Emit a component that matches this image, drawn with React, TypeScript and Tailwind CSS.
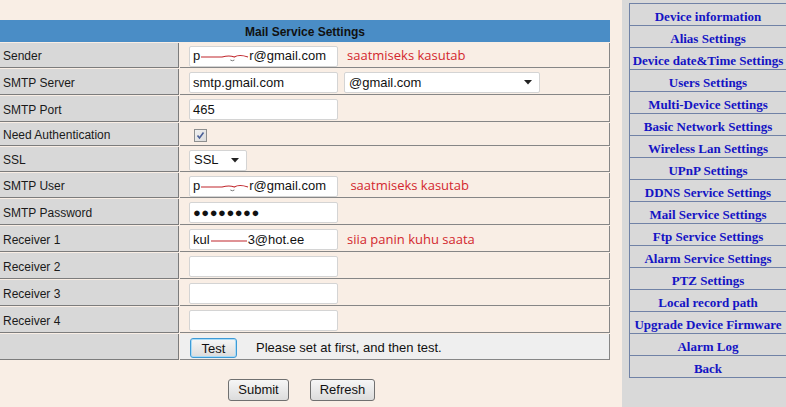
import React from "react";

const navItems = [
  "Device information",
  "Alias Settings",
  "Device date&Time Settings",
  "Users Settings",
  "Multi-Device Settings",
  "Basic Network Settings",
  "Wireless Lan Settings",
  "UPnP Settings",
  "DDNS Service Settings",
  "Mail Service Settings",
  "Ftp Service Settings",
  "Alarm Service Settings",
  "PTZ Settings",
  "Local record path",
  "Upgrade Device Firmware",
  "Alarm Log",
  "Back",
];

// red pen marks over the hidden parts of the addresses
function Scribble({ width, wavy }: { width: number; wavy?: boolean }) {
  return (
    <svg width={width} height="14" viewBox={`0 0 ${width} 14`} className="inline-block shrink-0">
      {wavy ? (
        <path
          d={`M1 8 L${width * 0.45} 8 Q${width * 0.6} 6 ${width * 0.7} 8 Q${width * 0.8} 5 ${width - 1} 8`}
          stroke="#c0272d"
          strokeWidth="1.2"
          fill="none"
        />
      ) : (
        <path d={`M1 8 L${width - 1} 8`} stroke="#c0272d" strokeWidth="1.2" fill="none" />
      )}
      {wavy && <path d={`M${width * 0.62} 11 q2 1.5 4 0`} stroke="#777" strokeWidth="1" fill="none" />}
    </svg>
  );
}

function Field({ children, w = "w-[149px]" }: { children?: React.ReactNode; w?: string }) {
  return (
    <div
      className={`${w} h-[21px] flex items-center px-[3px] bg-white border border-[#d4d4d4] rounded-[2px] text-[13px] text-[#111] whitespace-nowrap overflow-hidden`}
    >
      {children}
    </div>
  );
}

function Select({ label, w }: { label: string; w: string }) {
  return (
    <div
      className={`${w} h-[21px] flex items-center justify-between pl-[4px] pr-[7px] bg-white border border-[#d4d4d4] rounded-[2px] text-[13px] text-[#111]`}
    >
      <span>{label}</span>
      <svg width="8" height="5" viewBox="0 0 8 5">
        <path d="M0 0 L8 0 L4 4.5 Z" fill="#222" />
      </svg>
    </div>
  );
}

function Note({ children }: { children: React.ReactNode }) {
  return <span className="ml-[9px] text-[13px] text-[#d3272e] font-['Open_Sans',sans-serif]">{children}</span>;
}

function Row({
  label,
  h,
  children,
  light,
}: {
  label: string;
  h: string;
  children?: React.ReactNode;
  light?: boolean;
}) {
  return (
    <div className={`flex ${h} pt-[1px]`}>
      <div className="w-[179px] h-full bg-[#d8d8d8] border-r border-b border-[#7c7c7c] flex items-center pl-[3px] pt-[2px] text-[12px] text-[#1a1a1a]">
        {label}
      </div>
      <div
        className={`flex-1 ml-[1px] h-full border-r border-b border-[#868686] flex items-center pl-[9px] pt-[2px] ${
          light ? "bg-[#efefef]" : ""
        }`}
      >
        {children}
      </div>
    </div>
  );
}

function Button({ children, w, h = "h-[22px]", focused }: { children: React.ReactNode; w: string; h?: string; focused?: boolean }) {
  return (
    <button
      className={`${w} ${h} rounded-[3px] border text-[13px] text-[#111] bg-gradient-to-b from-[#f6f6f6] to-[#dcdcdc] ${
        focused ? "border-[#3d9ad6] shadow-[inset_0_0_0_1px_#a9dbf6]" : "border-[#707070]"
      }`}
    >
      {children}
    </button>
  );
}

export default function App() {
  return (
    <div className="flex w-[786px] h-[407px] overflow-hidden bg-[#f9eee5] font-['Liberation_Sans',Arial,sans-serif]">
      <div className="w-[622px] shrink-0 pt-[20px]">
        <div className="w-[610px]">
          <div className="h-[22px] bg-[#4a8dc6] flex items-center justify-center pt-[1px] text-[12px] font-bold text-[#111]">
            Mail Service Settings
          </div>
          <Row label="Sender" h="h-[26px]">
            <Field>
              p<Scribble width={49} wavy />r@gmail.com
            </Field>
            <Note>saatmiseks kasutab</Note>
          </Row>
          <Row label="SMTP Server" h="h-[27px]">
            <Field>smtp.gmail.com</Field>
            <div className="ml-[6px]">
              <Select label="@gmail.com" w="w-[196px]" />
            </div>
          </Row>
          <Row label="SMTP Port" h="h-[27px]">
            <Field>465</Field>
          </Row>
          <Row label="Need Authentication" h="h-[24px]">
            <div className="ml-[5px] w-[13px] h-[13px] border border-[#8e8f8f] bg-gradient-to-br from-[#f0f0f0] to-[#dcdcdc] flex items-center justify-center">
              <svg width="9" height="9" viewBox="0 0 9 9">
                <path d="M1.5 4.5 L3.5 7 L7.5 1.5" stroke="#4a5f97" strokeWidth="1.6" fill="none" />
              </svg>
            </div>
          </Row>
          <Row label="SSL" h="h-[26px]">
            <Select label="SSL" w="w-[58px]" />
          </Row>
          <Row label="SMTP User" h="h-[26px]">
            <Field>
              p<Scribble width={49} wavy />r@gmail.com
            </Field>
            <Note>&nbsp;saatmiseks kasutab</Note>
          </Row>
          <Row label="SMTP Password" h="h-[27px]">
            <Field>
              <span className="text-[13px] tracking-[0.5px]">●●●●●●●●</span>
            </Field>
          </Row>
          <Row label="Receiver 1" h="h-[27px]">
            <Field>
              kul<Scribble width={38} />3@hot.ee
            </Field>
            <Note>siia panin kuhu saata</Note>
          </Row>
          <Row label="Receiver 2" h="h-[27px]">
            <Field />
          </Row>
          <Row label="Receiver 3" h="h-[27px]">
            <Field />
          </Row>
          <Row label="Receiver 4" h="h-[27px]">
            <Field />
          </Row>
          <Row label="" h="h-[27px]" light>
            <div className="ml-[1px]">
              <Button w="w-[47px]" h="h-[20px]" focused>
                Test
              </Button>
            </div>
            <span className="ml-[19px] text-[13px] text-[#111]">Please set at first, and then test.</span>
          </Row>
          <div className="flex justify-center gap-[21px] mt-[19px] pr-[7px]">
            <Button w="w-[61px]">Submit</Button>
            <Button w="w-[65px]">Refresh</Button>
          </div>
        </div>
      </div>
      <div className="flex-1 bg-[#d9d9d9] pl-[7px] pt-[3px]">
        <div className="border-l border-t border-[#7082a6]">
          {navItems.map((item) => (
            <div
              key={item}
              className="h-[22px] border-b border-[#7082a6] flex items-center justify-center pt-[5px] whitespace-nowrap text-[13px] font-bold text-[#1414c4] font-['Liberation_Serif','Times_New_Roman',serif]"
            >
              {item}
            </div>
          ))}
        </div>
      </div>
    </div>
  );
}
